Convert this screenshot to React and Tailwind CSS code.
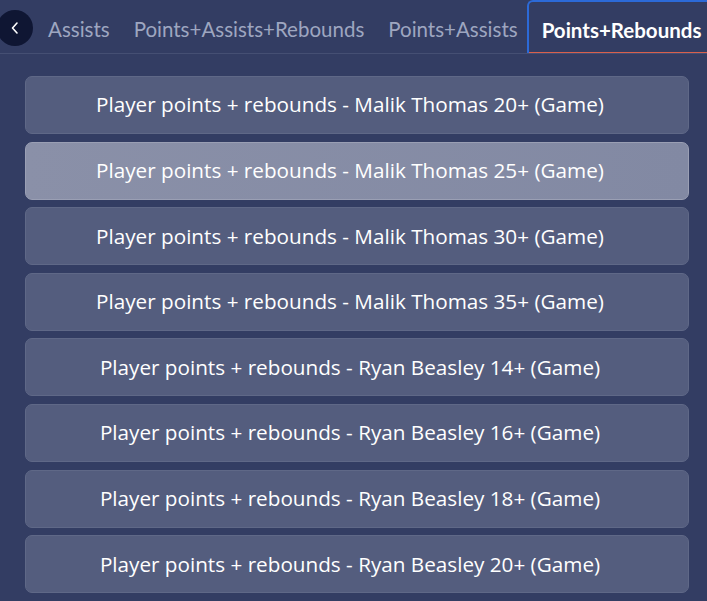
const items = [
  "Player points + rebounds - Malik Thomas 20+ (Game)",
  "Player points + rebounds - Malik Thomas 25+ (Game)",
  "Player points + rebounds - Malik Thomas 30+ (Game)",
  "Player points + rebounds - Malik Thomas 35+ (Game)",
  "Player points + rebounds - Ryan Beasley 14+ (Game)",
  "Player points + rebounds - Ryan Beasley 16+ (Game)",
  "Player points + rebounds - Ryan Beasley 18+ (Game)",
  "Player points + rebounds - Ryan Beasley 20+ (Game)",
];

const tabs = ["Assists", "Points+Assists+Rebounds", "Points+Assists"];

export default function App() {
  return (
    <div className="w-[707px] h-[601px] overflow-hidden bg-[#333d63] flex flex-col">
      <div className="relative h-[54px] shrink-0 flex items-end border-b border-[#454f73] overflow-hidden" style={{ fontFamily: "Lato, sans-serif" }}>
        <button className="absolute left-[-3px] top-[10px] w-[36px] h-[36px] rounded-full bg-[#0f1633] flex items-center justify-center text-white">
          <svg width="10" height="14" viewBox="0 0 10 14" fill="none">
            <path d="M7 2L2.5 7L7 12" stroke="white" strokeWidth="1.6" strokeLinecap="round" strokeLinejoin="round" />
          </svg>
        </button>
        <div className="flex items-center h-full pl-[48px] gap-[24px] whitespace-nowrap">
          {tabs.map((t) => (
            <span key={t} className="text-[20.5px] text-[#9ea6c0] leading-none pt-[5px]">{t}</span>
          ))}
          <div className="ml-[-15px] h-[54px] flex items-center pl-[13px] pr-[10px] border-l-2 border-t-2 border-[#2c6ad8] rounded-tl-[6px] relative">
            <span className="text-[20.5px] font-bold text-white leading-none pt-[5px]">Points+Rebounds</span>
            <div className="absolute left-0 right-0 bottom-0 h-[2px] bg-[#d9604c]" />
          </div>
        </div>
      </div>
      <div className="flex-1 flex pt-[22px] pl-[25px]">
        <div className="w-[664px] flex flex-col gap-[7.6px]">
          {items.map((it, i) => (
            <div
              key={it}
              className={
                i === 1
                  ? "h-[58px] shrink-0 rounded-[7px] border border-[#9a9fb4] bg-gradient-to-r from-[#8a90a8] to-[#8289a3] flex items-center justify-center pr-[14px]"
                  : "h-[58px] shrink-0 rounded-[7px] border border-[#5f6887] bg-[#545d7e] flex items-center justify-center pr-[14px]"
              }
            >
              <span className="text-white text-[20.7px] font-medium" style={{ fontFamily: "'Open Sans', sans-serif" }}>{it}</span>
            </div>
          ))}
        </div>
      </div>
    </div>
  );
}
